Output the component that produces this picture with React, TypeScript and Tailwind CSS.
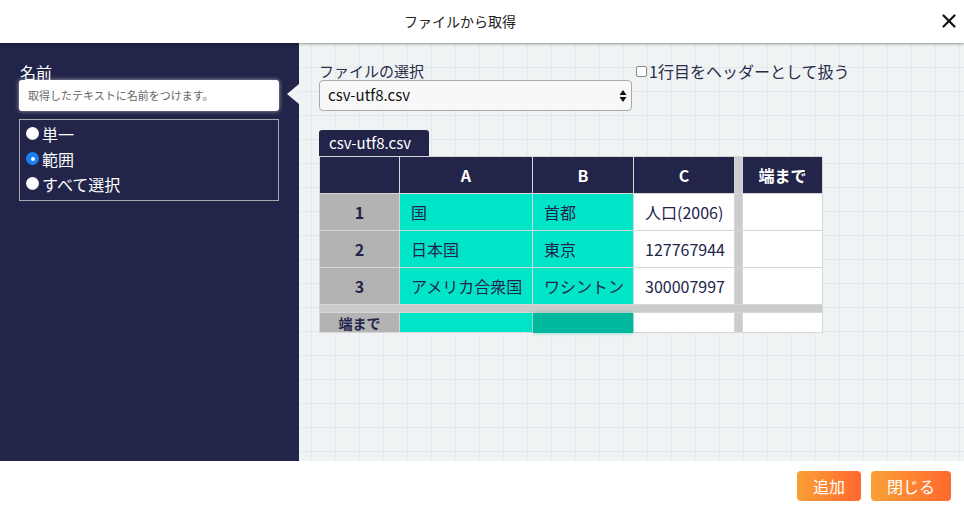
import { X } from 'lucide-react';

const font = "font-['Noto_Sans_CJK_JP','Noto_Sans',sans-serif]";

type Cell = { text: string; tone: 'teal' | 'white' };

const rows: { n: string; cells: Cell[] }[] = [
  {
    n: '1',
    cells: [
      { text: '国', tone: 'teal' },
      { text: '首都', tone: 'teal' },
      { text: '人口(2006)', tone: 'white' },
    ],
  },
  {
    n: '2',
    cells: [
      { text: '日本国', tone: 'teal' },
      { text: '東京', tone: 'teal' },
      { text: '127767944', tone: 'white' },
    ],
  },
  {
    n: '3',
    cells: [
      { text: 'アメリカ合衆国', tone: 'teal' },
      { text: 'ワシントン', tone: 'teal' },
      { text: '300007997', tone: 'white' },
    ],
  },
];

function Radio({ label, checked = false }: { label: string; checked?: boolean }) {
  return (
    <label className="flex items-center gap-[3px] h-[25px] text-[16px] text-white">
      {checked ? (
        <span className="w-[13px] h-[13px] rounded-full bg-[#1a7ff0] flex items-center justify-center">
          <span className="w-[4px] h-[4px] rounded-full bg-white" />
        </span>
      ) : (
        <span className="w-[13px] h-[13px] rounded-full bg-white shadow-[inset_0_-1px_1px_rgba(0,0,0,0.15)]" />
      )}
      {label}
    </label>
  );
}

function DataTable() {
  return (
    <div className="w-[504px]">
      <div className="flex w-[110px] h-[26px] items-center pl-[10px] bg-[#222549] text-white text-[15px] rounded-t-[3px]">
        csv-utf8.csv
      </div>
      <div className="grid grid-cols-[79px_132px_100px_100px_7px_79px] grid-rows-[36px_36px_36px_36px_7px_19px] gap-px bg-[#d6d6d6] border border-[#d6d6d6] text-[16px] text-[#222549]">
        {/* header row */}
        <div className="bg-[#222549]" />
        {['A', 'B', 'C'].map((h) => (
          <div key={h} className="bg-[#222549] text-white font-bold flex items-center justify-center">
            {h}
          </div>
        ))}
        <div className="bg-[#cccccc]" />
        <div className="bg-[#222549] text-white font-bold flex items-center justify-center">端まで</div>

        {/* data rows */}
        {rows.map((r) => (
          <div key={r.n} className="contents">
            <div className="bg-[#b3b3b3] font-bold flex items-center justify-center">{r.n}</div>
            {r.cells.map((c, i) => (
              <div
                key={i}
                className={`flex items-center px-[11px] whitespace-nowrap ${c.tone === 'teal' ? 'bg-[#00e5c8]' : 'bg-white'}`}
              >
                {c.text}
              </div>
            ))}
            <div className="bg-[#cccccc]" />
            <div className="bg-white" />
          </div>
        ))}

        {/* separator row */}
        <div className="col-span-6 bg-[#cccccc]" />

        {/* 端まで row */}
        <div className="bg-[#b3b3b3] font-bold text-[14px] flex items-center justify-center leading-none">端まで</div>
        <div className="bg-[#00e5c8]" />
        <div className="bg-[#00b89d] shadow-[0_0_4px_rgba(0,184,157,0.5)] -mb-px" />
        <div className="bg-white" />
        <div className="bg-[#cccccc]" />
        <div className="bg-white" />
      </div>
    </div>
  );
}

export default function App() {
  return (
    <div className={`w-[964px] h-[510px] flex flex-col bg-white ${font}`}>
      {/* Header */}
      <header className="relative z-10 h-[43px] shrink-0 flex items-center justify-center pr-[44px] bg-white shadow-[0_1px_3px_rgba(0,0,0,0.35)]">
        <span className="text-[14px] text-[#222]">ファイルから取得</span>
        <X className="absolute right-[4px] top-[10px] w-[22px] h-[22px] text-[#111]" strokeWidth={2.4} />
      </header>

      {/* Body */}
      <div className="flex flex-1 min-h-0">
        {/* Sidebar */}
        <aside className="relative w-[299px] shrink-0 bg-[#222549] pt-[20px] px-[19px]">
          <div className="text-[16px] text-white leading-[18px] pl-px">名前</div>
          <div className="mt-[-1px] w-[260px] h-[31px] rounded-[3px] bg-white shadow-[0_0_4px_rgba(255,255,255,0.6)] flex items-center px-[9px] text-[11px] text-[#666]">
            取得したテキストに名前をつけます。
          </div>
          <div className="mt-[8px] w-[260px] h-[82px] border border-[#aaaaaa] px-[6px] pt-[1px] flex flex-col">
            <Radio label="単一" />
            <Radio label="範囲" checked />
            <Radio label="すべて選択" />
          </div>
          {/* pointer */}
          <div className="absolute right-0 top-[41px] w-0 h-0 border-y-[10px] border-y-transparent border-r-[12px] border-r-[#f0f3f4]" />
        </aside>

        {/* Main */}
        <main className="flex-1 bg-[#f0f3f4] bg-[linear-gradient(to_right,#e5e8ea_1px,transparent_1px),linear-gradient(to_bottom,#e5e8ea_1px,transparent_1px)] bg-[size:24px_24px] bg-[position:12px_0] pl-[20px] pt-[19px] text-[#2b2d4a]">
          <div className="flex items-start">
            <div className="w-[314px]">
              <div className="text-[15px] leading-[18px]">ファイルの選択</div>
              <div className="w-[313px] h-[31px] rounded-[4px] border border-[#aaaaaa] bg-[#f8f8f8] flex items-center justify-between pl-[8px] pr-[4px] text-[15px] text-[#111]">
                csv-utf8.csv
                <svg width="8" height="14" viewBox="0 0 8 14" className="text-[#111]">
                  <path d="M4 1 L7.5 6 H0.5 Z M4 13 L7.5 8 H0.5 Z" fill="currentColor" />
                </svg>
              </div>
            </div>
            <label className="ml-[3px] mt-[-1px] flex items-center gap-[2px] text-[16px] leading-[20px]">
              <span className="w-[11px] h-[11px] rounded-[2px] border border-[#888] bg-white" />
              1行目をヘッダーとして扱う
            </label>
          </div>

          <div className="mt-[19px]">
            <DataTable />
          </div>
        </main>
      </div>

      {/* Footer */}
      <footer className="h-[49px] shrink-0 flex items-center justify-end gap-[10px] pr-[13px] bg-white">
        <button className="w-[64px] h-[30px] rounded-[4px] bg-[linear-gradient(to_right,#f9a036,#ff692e)] text-white text-[16px]">
          追加
        </button>
        <button className="w-[80px] h-[30px] rounded-[4px] bg-[linear-gradient(to_right,#f9a036,#ff692e)] text-white text-[16px]">
          閉じる
        </button>
      </footer>
    </div>
  );
}
